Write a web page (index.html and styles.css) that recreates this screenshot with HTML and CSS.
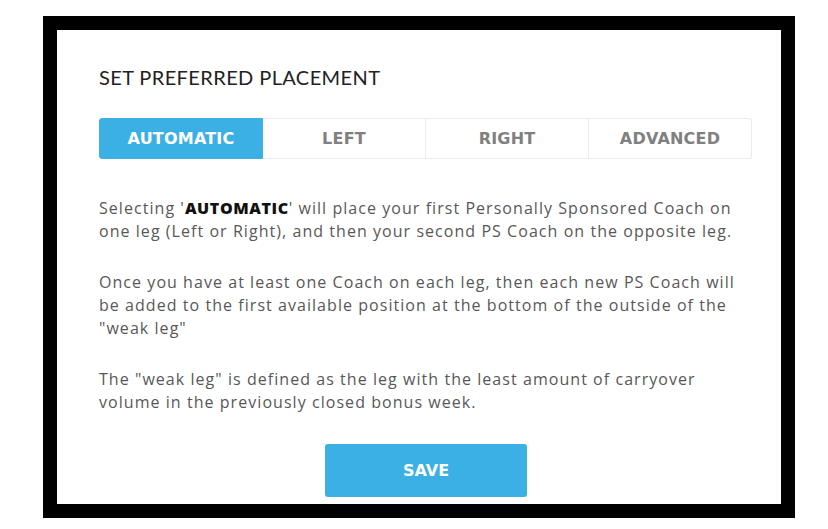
FILE: index.html
```html
<!DOCTYPE html>
<html>
<head>
<meta charset="utf-8">
<link rel="stylesheet" href="styles.css">
</head>
<body>
<div class="frame">
  <div class="panel">
    <h2 class="title">SET PREFERRED PLACEMENT</h2>
    <div class="tabs">
      <div class="tab active">AUTOMATIC</div>
      <div class="tab">LEFT</div>
      <div class="tab">RIGHT</div>
      <div class="tab">ADVANCED</div>
    </div>
    <p class="text">Selecting '<b>AUTOMATIC</b>' will place your first Personally Sponsored Coach on one leg (Left or Right), and then your second PS Coach on the opposite leg.</p>
    <p class="text">Once you have at least one Coach on each leg, then each new PS Coach will be added to the first available position at the bottom of the outside of the "weak leg"</p>
    <p class="text">The "weak leg" is defined as the leg with the least amount of carryover volume in the previously closed bonus week.</p>
    <div class="actions">
      <button class="save">SAVE</button>
    </div>
  </div>
</div>
</body>
</html>
```
FILE: styles.css
```css
html, body {
  margin: 0;
  padding: 0;
  background: #fff;
}
body {
  width: 828px;
  height: 529px;
  overflow: hidden;
  padding-top: 16px;
  padding-left: 43px;
  box-sizing: border-box;
}
.frame {
  width: 752px;
  height: 502px;
  box-sizing: border-box;
  border: 14px solid #000;
  background: #fff;
  overflow: hidden;
}
.panel {
  padding: 0 29px 0 42px;
}
.title {
  margin: 0;
  padding-top: 35px;
  font-family: "Lato", sans-serif;
  font-weight: 400;
  font-size: 20px;
  line-height: 24px;
  letter-spacing: 0.4px;
  color: #222;
}
.tabs {
  display: flex;
  margin-top: 29px;
  height: 41px;
}
.tab {
  flex: 1;
  display: flex;
  align-items: center;
  justify-content: center;
  border: 1px solid #ececec;
  border-left: none;
  font-family: "DejaVu Sans", sans-serif;
  font-weight: 700;
  font-size: 16px;
  letter-spacing: 0.2px;
  color: #808080;
}
.tab:first-child {
  border-left: 1px solid #ececec;
}
.tab:last-child {
  border-radius: 0 3px 3px 0;
}
.tab.active {
  background: #3bb0e4;
  border-color: #3bb0e4;
  color: #fff;
  border-radius: 3px 0 0 3px;
}
.text {
  margin: 0;
  font-family: "Open Sans", sans-serif;
  font-size: 16px;
  line-height: 23px;
  letter-spacing: 1.05px;
  color: #585858;
}
.tabs + .text {
  margin-top: 38px;
}
.text + .text {
  margin-top: 28px;
}
.text b {
  color: #111;
  font-weight: 800;
  letter-spacing: 0.6px;
}
.actions {
  display: flex;
  justify-content: center;
  margin-top: 30px;
}
.save {
  width: 202px;
  height: 53px;
  border: none;
  border-radius: 3px;
  background: #3bb0e4;
  color: #fff;
  font-family: "DejaVu Sans", sans-serif;
  font-weight: 700;
  font-size: 16px;
  margin-left: 1px;
}
```
